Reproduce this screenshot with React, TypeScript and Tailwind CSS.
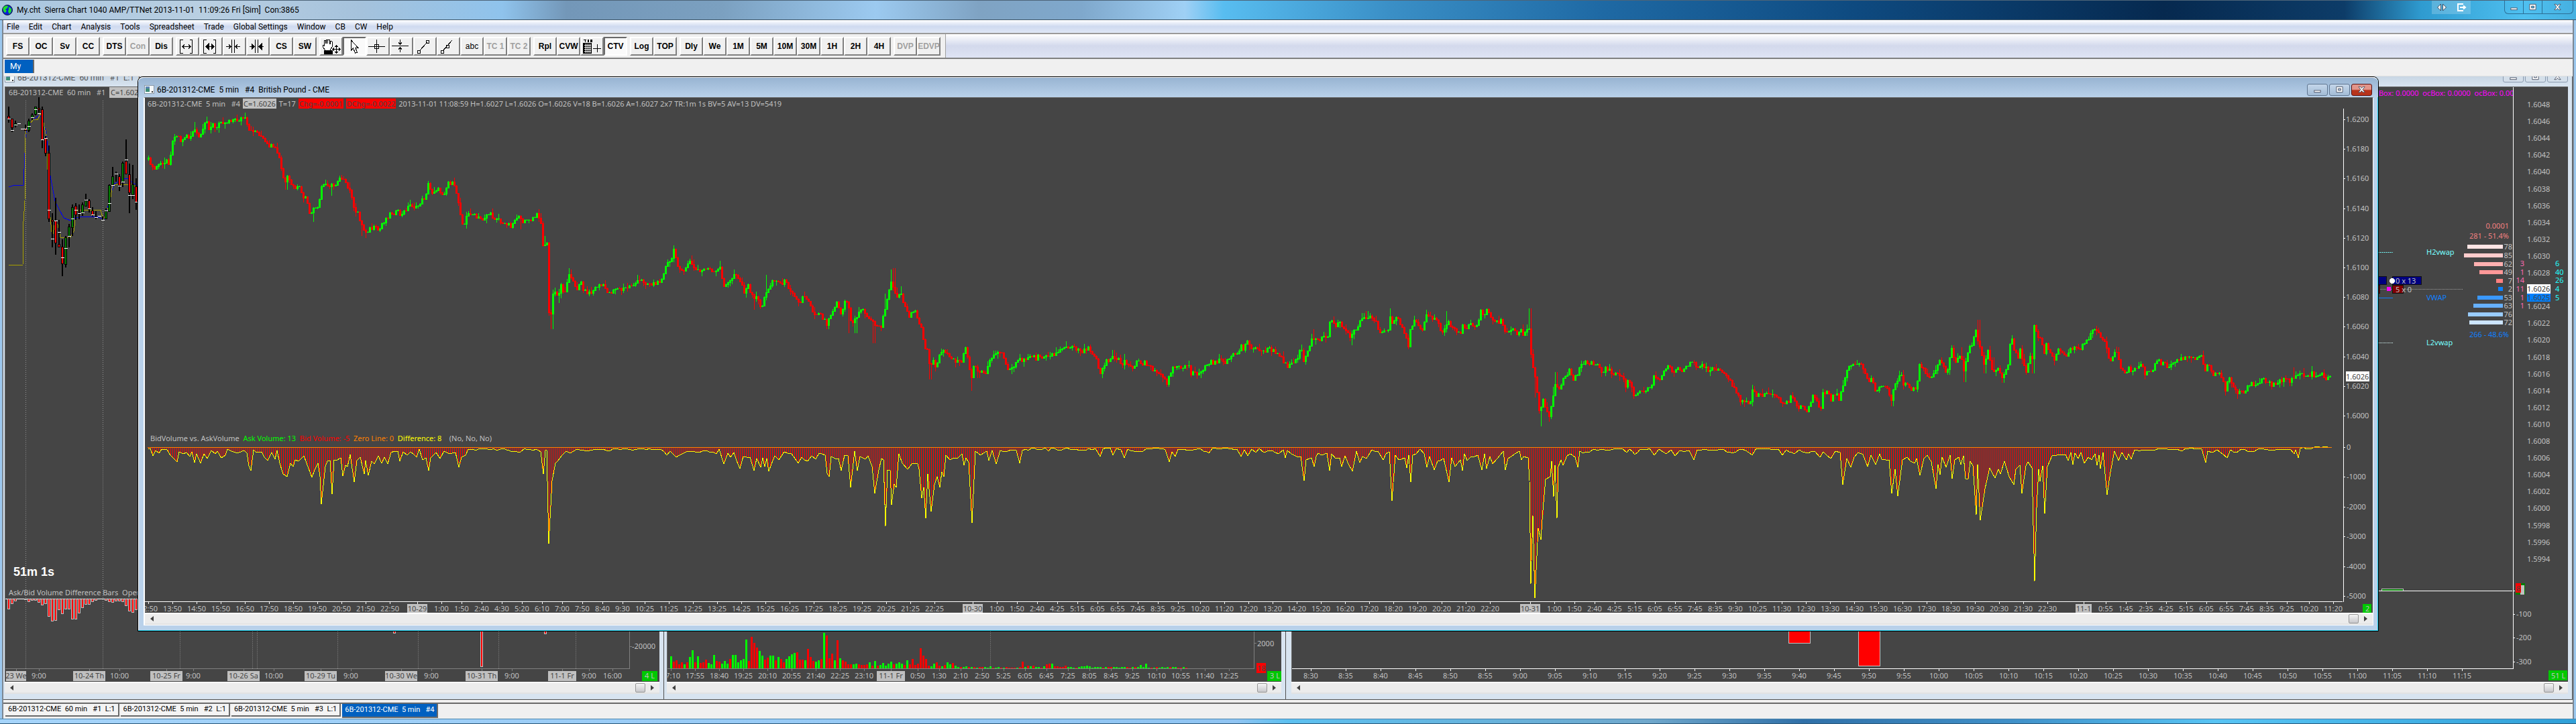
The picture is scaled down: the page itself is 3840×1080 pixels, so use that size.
import type { ReactNode } from 'react';
import clsx from 'clsx';

type Point = [number, number, number?];
type Label = { x: number; text: string; day?: boolean };

// Each trading session is digitised on its own grid; place() brings it into workspace pixels.
function place(src: string, ox: number, oy: number, kx: number, ky: number): Point[] {
  return src.trim().split(/\s+/).map((s) => {
    const [x, y, w] = s.split(',').map(Number);
    return [ox + x / kx, oy + y / ky, w === undefined ? undefined : oy + w / ky];
  });
}

const price: Point[] = [
  ...place(`27,190 32,196 38,224 46,210 52,200 58,212 64,192 68,200 74,160 78,120 85,118 94,138 102,120 110,128 117,98,82 126,130
  135,108 141,76 147,100 153,86 161,108 168,74 178,86 186,74 200,76 216,68 222,100 227,114 234,104 245,118 258,145 264,160 271,148
  278,172 286,200 290,245 296,260,280 298,238 306,262 316,285 322,264 328,300 334,302 342,345 348,350,375 352,330 357,345 362,310
  365,272 375,262 385,268,298 392,268 400,242 405,242 412,262 420,282 426,300 430,356 436,342 443,380,415 450,402,422 460,394
  468,392 478,400 484,376 492,362 500,348 515,346 522,356 530,336 540,322 550,334 560,314 568,300 573,262 580,288 590,276 602,290
  607,285 612,256 620,262 628,284 634,330 640,374 644,380 650,352 656,348 668,362 680,366 690,348 700,360 710,362 718,384 726,376
  736,386 745,356 752,366,396 756,374 762,366 770,374 778,364 788,350 793,372 796,450 799,436,415 805,440 808,640 813,642,688 818,570
  826,594,612 832,552 838,592 843,550 848,528,510 855,548 864,568 870,548 878,576 890,582 906,556 916,564 926,582 938,568 950,572
  965,562 988,544 1000,554 1020,554 1030,530 1038,498 1046,490 1052,458 1060,498 1072,526 1082,482 1090,510 1104,520 1115,506
  1130,526 1142,508,488 1150,562 1160,552 1172,520 1184,556 1192,588 1195,552 1208,604,632 1213,586 1222,628 1230,590,530 1238,560
  1245,544 1260,552 1268,548 1280,572 1290,592 1297,616 1305,586 1316,606 1326,646 1334,636 1350,670,687 1358,640 1366,618 1371,606
  1378,648 1386,600 1392,622,700 1398,670 1406,656,700 1414,636 1422,628 1432,660 1440,666,730 1454,688 1462,640,585 1468,600
  1474,542,514 1480,560,510 1484,590 1494,582,562 1502,620 1510,648 1520,628 1528,670`, 200, 140, 1.3067, 1.96),
  ...place(`229,400 236,485 238,448 244,540,590 250,508 256,556 262,500 270,480 280,490 292,520,544 300,512 306,525 312,465 320,510
  324,606,634 328,538 338,552,585 346,562 354,560 358,520 368,498 380,480 388,510 396,545 406,535 414,530 418,510 426,520 440,492
  452,510 458,495 464,505 468,486 478,500 488,490 500,466 530,466 540,480 550,466 556,480 568,500 575,566 582,540 588,510 594,520
  600,498,476 610,510 618,535,545 622,505,490 630,536 640,540 650,516 656,530 662,518 672,538 684,556 694,576 706,604,618 710,568
  720,535 735,540 748,536 753,580 758,560 768,568 780,540 790,524 805,518 820,518 832,500 846,490 850,462 856,475 860,432 866,455
  874,475 880,458 888,475 896,490 904,455 908,488 912,462 920,490 930,510 938,535 950,530 955,530 962,490 967,465 972,518 978,492
  984,455 990,430,395 1004,440 1010,425,405 1018,430 1024,360 1030,355 1034,380 1040,366 1050,385 1058,400 1064,425,457 1070,402
  1078,385 1085,345 1095,355,325 1104,345 1114,370 1120,400 1130,405 1138,395 1140,340,313 1146,380 1154,350 1160,375 1168,412
  1176,455 1180,400 1188,350 1196,375 1204,390 1210,345,318 1216,335 1222,365 1226,340 1234,375 1242,410 1250,380,325 1252,355
  1258,380 1266,390 1276,420 1282,376 1290,390 1296,368 1304,378 1312,370 1316,318 1322,348 1328,318 1334,330 1344,370 1356,360
  1364,395 1372,405 1380,395 1390,410 1396,400 1402,420 1406,392 1412,395,313 1416,520 1422,570,660 1426,620 1430,710 1434,708,773
  1438,665 1444,700 1450,728,756 1456,680,620 1460,632`, 1200, 340, 1.3067, 2.613),
  ...place(`134,480,435 140,500 146,465 152,440 158,425 163,460 172,432 180,390 190,400 205,395 210,438 218,415 228,440 236,440
  246,455 250,490 258,465 266,548 272,510 286,505 294,495 298,452 306,465 312,448 318,412 324,415 330,435 340,418 348,422 356,410
  364,385 370,410 378,400 390,435 398,418 406,430 416,438 424,470 436,525 444,555 452,545 458,570 462,512 470,535 482,522 496,528
  504,530 514,570 522,560 528,528 536,570 545,585 555,602 562,535 570,550 576,595 580,525 588,520 594,550 602,515 607,550 614,490
  620,430 630,390 636,410 644,395 650,430 656,485 660,455 668,515 676,490 684,495 690,510 695,560,576 700,480 706,480 710,430
  716,500 720,465 726,520 732,490 737,520 740,400 748,425 756,465 764,450 770,420 775,380 780,400 786,440 790,400 795,335 802,400
  810,365,330 816,430,475 824,330 830,320 835,242 840,310,215 850,405,440 855,345 864,430,372 870,415 880,450,480 890,400 894,282 900,340
  906,370 908,320 914,385 920,435 926,370 930,385,440 933,230 940,290 945,290 950,360 953,312 960,360 966,385 972,335 980,350
  986,365 996,330 1008,342 1014,320 1022,300 1028,262 1034,262 1038,255 1046,300 1052,315 1058,385 1070,350 1076,410 1086,435
  1090,410 1096,440 1104,415 1112,400 1118,438 1130,435 1136,385 1146,395 1158,415 1170,390 1180,375 1194,375 1205,378 1212,360
  1218,425 1224,405 1232,445 1244,435 1252,510,532 1258,445 1264,490 1272,515,545 1282,515 1294,485 1302,490 1314,462 1328,485
  1340,470 1350,465 1360,475,492 1366,450,415 1378,435 1386,450 1396,440 1404,450 1412,435 1418,460 1422,452`, 2200, 400, 1.12, 2.8),
];

const difference: Point[] = [
  ...place(`27,1036 32,1036 36,1058 42,1042 48,1050 54,1038 64,1040 70,1056 76,1064 83,1076 88,1046 96,1052 102,1048 108,1060
  112,1046 118,1078 122,1052 130,1080 136,1052 142,1066 150,1042 158,1052 162,1044 170,1064 178,1056 181,1038 190,1044 204,1048
  214,1042 220,1050 224,1088 228,1102 232,1040 238,1048 248,1046 260,1072 268,1048 275,1068 278,1042 284,1080 290,1112 298,1120
  304,1080 310,1090 314,1070 320,1074 330,1058 336,1080 346,1122 352,1100 358,1080 362,1120 365,1200 372,1090 376,1074 381,1072
  385,1170 390,1070 402,1064 407,1118 412,1085 416,1090 421,1055 428,1134 434,1072 440,1062 448,1112 451,1072 456,1116 462,1075
  468,1082 476,1058 482,1080 488,1062 494,1082 500,1048 514,1044 518,1074 524,1046 532,1056 538,1046 550,1062 556,1038 562,1070
  568,1065 573,1102 578,1065 588,1048 596,1066 604,1044 614,1052 626,1048 633,1092 638,1062 646,1056 651,1038 700,1037 706,1042
  720,1036 752,1048 760,1036 788,1042 792,1046 797,1112 801,1042 804,1040 808,1315 814,1130 820,1080 826,1072 834,1056 842,1044
  850,1050 862,1038 880,1044 900,1038 920,1042 950,1038 980,1038 1026,1038 1038,1056 1044,1044 1056,1062 1070,1050 1086,1044
  1100,1048 1114,1042 1126,1046 1134,1052 1140,1038 1149,1082 1156,1050 1162,1062 1168,1048 1174,1072 1180,1095 1186,1060
  1200,1062 1207,1102 1213,1066 1220,1092 1224,1064 1228,1090 1232,1066 1236,1104 1248,1058 1256,1070 1266,1046 1280,1052
  1294,1080 1300,1062 1312,1074 1320,1058 1328,1068 1334,1050 1346,1056 1350,1110 1354,1120 1358,1060 1372,1066 1377,1102
  1384,1056 1390,1058 1396,1150 1404,1044 1408,1102 1414,1060 1424,1068 1430,1058 1438,1090 1443,1168 1450,1100 1456,1066
  1460,1070 1463,1264 1468,1100 1472,1102 1475,1202 1480,1140 1484,1150 1490,1052 1496,1080 1506,1098 1516,1080 1526,1082`, 200, 140, 1.3067, 1.96),
  ...place(`222,940 227,1052 231,1012 235,1132 239,960 246,1106 252,1000 258,970 262,1010 266,950 270,970 275,885 282,905 290,895
  298,895 306,880 310,925 314,895 319,915 325,1150 332,870 342,885 354,870 358,908 364,868 372,920 380,868 395,870 408,866 412,868
  418,916 424,868 440,860 468,858 474,870 480,856 500,864 510,858 540,866 566,860 575,892 580,862 594,858 600,885 606,860 616,866
  622,895 628,862 652,872 664,862 690,860 702,864 710,912 715,872 721,892 727,862 750,866 770,860 787,878 795,858 830,860 842,862
  850,890 856,866 862,888 870,862 878,876 884,860 894,876 904,868 910,868 922,880 932,864 936,895 940,868 948,880 958,890 966,892
  972,985 976,904 982,900 986,895 992,930 996,890 1000,878 1006,886 1016,878 1022,945 1026,880 1034,900 1042,895 1046,930 1052,888
  1066,948 1074,870 1080,915 1086,890 1094,900 1104,866 1116,870 1126,905 1132,880 1138,872 1144,1064 1150,885 1156,905 1168,895
  1172,935 1176,885 1180,990 1184,885 1190,880 1198,862 1206,880 1211,932 1216,890 1226,942 1232,910 1244,900 1254,990 1260,895
  1266,930 1276,905 1281,945 1284,880 1290,908 1298,890 1310,885 1318,942 1324,880 1328,938 1334,890 1340,920 1348,900 1354,885
  1360,870 1364,942 1370,900 1382,880 1392,870 1396,905 1400,890 1408,895 1411,985 1414,1388 1418,1120 1422,1443 1428,1170
  1434,1215 1438,1100 1442,980 1452,970 1455,910 1458,1048 1461,926 1465,1132`, 1200, 340, 1.3067, 2.613),
  ...place(`138,830 142,800 146,822 152,785 158,775 166,790 170,832 174,765 184,768 196,756 220,758 244,752 252,770 256,755
  265,778 274,756 290,752 298,780 306,756 318,775 326,758 333,785 340,762 356,762 364,802 370,760 384,756 398,762 410,755 428,774
  440,757 450,762 461,780 468,754 505,755 512,780 518,758 532,776 540,758 550,770 566,765 574,790 580,766 586,780 593,795 600,765
  608,770 613,903 619,795 626,832 632,790 638,770 646,778 654,830 660,780 668,820 674,775 678,798 690,800 694,942 700,840 704,952
  712,800 720,790 732,815 736,795 741,865 748,795 754,780 760,810 768,922 772,820 775,862 778,790 785,832 792,780 795,878 800,800
  806,790 810,820 814,785 818,878 822,878 825,805 830,825 835,1030 838,820 842,1052 850,920 858,835 867,875 872,840 876,860
  882,805 890,870 898,904 902,840 908,822 912,940 918,825 922,808 928,835 933,1307 936,1000 940,840 942,890 946,825 950,1025
  954,830 962,785 970,782 984,778 989,803 993,770 997,820 1000,772 1006,795 1010,770 1016,815 1022,790 1028,800 1034,775
  1037,822 1040,780 1043,836 1047,770 1054,946 1060,850 1066,765 1073,804 1078,770 1086,800 1090,775 1094,798 1100,758 1120,760
  1140,754 1170,755 1176,762 1190,752 1212,755 1218,812 1222,765 1230,770 1238,758 1246,775 1254,792 1260,758 1270,770 1278,756
  1298,768 1306,755 1330,758 1360,756 1366,775 1369,760 1373,792 1377,752 1400,748 1422,748`, 2200, 400, 1.12, 2.8),
];

const ZERO_Y = 667;
const FIRST_BAR = 221;
const LAST_BAR = 3475;

function at(points: Point[], x: number) {
  let i = 1;
  while (i < points.length - 1 && points[i][0] < x) i++;
  const [x0, y0] = points[i - 1];
  const [x1, y1] = points[i];
  const t = Math.min(1, Math.max(0, (x - x0) / (x1 - x0)));
  return y0 + (y1 - y0) * t;
}

// small repeatable jitter, 0..1
const noise = (n: number) => {
  const s = Math.sin(n * 12.9898) * 43758.5453;
  return s - Math.floor(s);
};

function buildCandles() {
  const out = { upBody: '', upWick: '', downBody: '', downWick: '' };
  let open = at(price, FIRST_BAR - 1);
  for (let x = FIRST_BAR, i = 0; x <= LAST_BAR; x += 3, i++) {
    const close = at(price, x + 1) + (noise(i) - 0.5) * 7;
    const spike = price.find((p) => p[2] !== undefined && Math.abs(p[0] - x) <= 2)?.[2];
    let top = Math.min(open, close);
    let bottom = Math.max(open, close);
    const up = close < open;
    const body = `M${x + 0.5} ${Math.round(top)}V${Math.round(bottom) + 1}`;
    top -= noise(i + 500) > 0.6 ? noise(i + 900) * 8 : 1;
    bottom += noise(i + 1700) > 0.6 ? noise(i + 2500) * 8 : 1;
    if (spike !== undefined) {
      top = Math.min(top, spike);
      bottom = Math.max(bottom, spike);
    }
    const wick = `M${x + 0.5} ${Math.round(top)}V${Math.round(bottom)}`;
    if (up) {
      out.upBody += body;
      out.upWick += wick;
    } else {
      out.downBody += body;
      out.downWick += wick;
    }
    open = close;
  }
  return out;
}

function buildDifference() {
  let line = '';
  let bars = '';
  difference.forEach(([x, y], i) => {
    if (i > 0) {
      const [px, py] = difference[i - 1];
      const steps = Math.floor((x - px) / 4);
      for (let s = 1; s < steps; s++) {
        const t = s / steps;
        line += `L${Math.round(px + (x - px) * t)} ${Math.round(py + (y - py) * t + noise(i * 7 + s) * 3 - 1)}`;
      }
    }
    line += `${i ? 'L' : 'M'}${Math.round(x)} ${Math.round(y)}`;
  });
  for (let x = FIRST_BAR; x <= LAST_BAR; x += 3) bars += `M${x + 0.5} ${ZERO_Y}V${Math.round(at(difference, x))}`;
  return { line, bars };
}

const candles = buildCandles();
const diff = buildDifference();

function run(first: number, step: number, texts: string): Label[] {
  return texts.split(' ').map((text, i) => ({ x: first + i * step, text }));
}

const mainTimes: Label[] = [
  ...run(221, 36, '12:50 13:50 14:50 15:50 16:50 17:50 18:50 19:50 20:50 21:50 22:50'),
  { x: 622, text: '10-29', day: true },
  ...run(658, 30, '1:00 1:50 2:40 4:30 5:20 6:10 7:00 7:50 8:40 9:30'),
  ...run(961, 36, '10:25 11:25 12:25 13:25 14:25 15:25 16:25 17:25 18:25 19:25 20:25 21:25 22:25'),
  { x: 1450, text: '10-30', day: true },
  ...run(1486, 30, '1:00 1:50 2:40 4:25 5:15 6:05 6:55 7:45 8:35 9:25'),
  ...run(1789, 36, '10:20 11:20 12:20 13:20 14:20 15:20 16:20 17:20 18:20 19:20 20:20 21:20 22:20'),
  { x: 2281, text: '10-31', day: true },
  ...run(2317, 30, '1:00 1:50 2:40 4:25 5:15 6:05 6:55 7:45 8:35 9:30'),
  ...run(2620, 36, '10:25 11:30 12:30 13:30 14:30 15:30 16:30 17:30 18:30 19:30 20:30 21:30 22:30'),
  { x: 3106, text: '11-1', day: true },
  ...run(3139, 30, '0:55 1:45 2:35 4:25 5:15 6:05 6:55 7:45 8:35 9:25'),
  ...run(3442, 36, '10:20 11:20'),
];

const hourlyTimes: Label[] = [
  { x: 24, text: '23 We', day: true },
  { x: 58, text: '9:00' },
  { x: 133, text: '10-24 Th', day: true },
  { x: 178, text: '10:00' },
  { x: 248, text: '10-25 Fr', day: true },
  { x: 288, text: '9:00' },
  { x: 363, text: '10-26 Sa', day: true },
  { x: 408, text: '10:00' },
  { x: 478, text: '10-29 Tu', day: true },
  { x: 523, text: '9:00' },
  { x: 598, text: '10-30 We', day: true },
  { x: 643, text: '9:00' },
  { x: 718, text: '10-31 Th', day: true },
  { x: 763, text: '9:00' },
  { x: 838, text: '11-1 Fr', day: true },
  { x: 878, text: '9:00' },
  { x: 913, text: '16:00' },
];

const volumeTimes: Label[] = [
  ...run(1000, 36, '17:10 17:55 18:40 19:25 20:10 20:55 21:40 22:25 23:10'),
  { x: 1328, text: '11-1 Fr', day: true },
  ...run(1368, 32, '0:50 1:30 2:10 2:50 5:25 6:05 6:45 7:25 8:05 8:45 9:25'),
  ...run(1724, 36, '10:10 10:55 11:40 12:25'),
];

const ladderTimes: Label[] = Array.from({ length: 34 }, (_, i) => {
  const m = 510 + i * 5;
  return { x: 1954 + i * 52, text: `${Math.floor(m / 60)}:${String(m % 60).padStart(2, '0')}` };
});

// x, high, low, body top, body bottom, up?, last-trade tick
const hourly: [number, number, number, number, number, 'g' | 'r' | '', number][] = [
  [13, 159, 183, 173, 178, 'r', 177], [18, 177, 197, 177, 190, 'r', 194], [23, 180, 190, 184, 187, 'g', 186],
  [28, 0, 0, 0, 0, '', 184], [33, 0, 0, 0, 0, '', 192], [38, 186, 195, 192, 194, 'r', 192],
  [43, 177, 197, 180, 194, 'g', 188], [48, 169, 179, 171, 175, 'g', 175], [53, 159, 172, 159, 170, 'g', 163],
  [58, 145, 168, 161, 163, 'r', 169], [63, 159, 221, 163, 208, 'r', 208], [68, 203, 233, 206, 228, 'r', 206],
  [73, 217, 331, 228, 326, 'r', 313], [78, 318, 369, 328, 330, 'r', 356], [83, 295, 380, 329, 362, 'r', 329],
  [88, 328, 369, 364, 368, 'r', 346], [93, 357, 412, 368, 393, 'r', 384], [98, 352, 399, 354, 394, 'g', 370],
  [103, 334, 369, 338, 352, 'g', 352], [108, 305, 352, 309, 339, 'g', 326], [113, 303, 328, 307, 320, 'r', 313],
  [118, 305, 327, 0, 0, '', 318], [123, 302, 322, 305, 318, 'g', 317], [128, 289, 307, 299, 307, 'g', 298],
  [133, 297, 317, 299, 312, 'r', 311], [138, 309, 323, 314, 320, 'r', 320], [143, 315, 327, 0, 0, '', 324],
  [148, 0, 0, 0, 0, '', 322], [153, 323, 328, 0, 0, '', 328], [158, 311, 327, 315, 326, 'g', 314],
  [163, 275, 315, 276, 315, 'g', 303], [168, 249, 276, 263, 275, 'g', 276], [173, 256, 271, 0, 0, '', 259],
  [178, 260, 285, 263, 276, 'r', 277], [183, 241, 279, 243, 271, 'g', 271], [188, 208, 259, 240, 259, 'r', 238],
  [193, 244, 318, 260, 287, 'r', 291], [198, 246, 297, 275, 290, 'g', 291], [203, 266, 313, 278, 302, 'r', 301],
];

const hourlyVolume = [15, 7, 3, 0, 0, 1, 4, 2, 2, 5, 9, 7, 26, 33, 32, 16, 22, 15, 15, 30, 30, 21, 13, 8, 8, 4, 2, 0, 0, 2, 4, 5, 3, 3, 4, 10, 18, 20, 16];

const volume = `g18 r10 r12 r6 r9 g6 r9 g17 g27 r9 g18 r8 r9 r13 g8 g6 g20 r11 r10 g7 g11 g7 r14 g20 g20 g9 g12 g14 g43 r11 r47 r38
r31 g26 g19 r13 r16 g19 g19 r12 g17 r14 r9 g14 g18 g21 g23 r24 r13 r13 g12 r29 r17 r11 g10 g12 r14 g53 r49 r15 r22 g12 r42 g15 r12
r10 r6 r6 g6 g7 r6 r5 r5 r6 g9 r4 g11 r4 g5 g8 g4 g7 g10 r6 g7 g9 g7 r5 g12 r6 r14 r5 r7 r30 r19 r14 r4 g3 g7 r9 r4 g3 r5 g9 g6
r8 g4 g2 r2 g2 g3 r2 g2 r2 g1 r2 r2 g2 g1 g3 r1 g1 g2 r1 g1 r2 r1 r1 r1 g1 r2 r10 g2 r4 g3 r4 g2 g2 r1 g3 r6 r7 g7 r3 r3 r2 r2 r4
g2 g2 g1 r1 g2 g3 g3 g4 g3 g1 g2 g2 g2 r1 g2 r2 r2 g2 g2 g1 g2 g2 r2 r1 g2 r2 g2 g5 g2 g7 g1 r1 g1 r2 g1 g2 g1 g2 r2 g2 g2 r1 r1 g2 r1`
  .split(/\s+/)
  .map((s) => ({ up: s[0] === 'g', h: Number(s.slice(1)) }));

const domRows = [
  { y: 368, x: 3678, n: 78, fill: '#ffe4e4' },
  { y: 381, x: 3673, n: 85, fill: '#ffcccc' },
  { y: 394, x: 3688, n: 62, fill: '#ffb0b0' },
  { y: 406, x: 3696, n: 49, fill: '#ff9898' },
  { y: 419, x: 3721, n: 7, fill: '#ff8080' },
  { y: 431, x: 3724, n: 2, fill: '#0a80ff' },
  { y: 444, x: 3693, n: 53, fill: '#3a98ff' },
  { y: 456, x: 3687, n: 63, fill: '#66b0ff' },
  { y: 469, x: 3679, n: 76, fill: '#99ccff' },
  { y: 481, x: 3681, n: 72, fill: '#cce4ff' },
];

const depth: [number, string, string][] = [
  [393, '3', '6'], [406, '1', '40'], [418, '14', '26'], [431, '11', '4'], [444, '1', '5'], [456, '1', ''],
];

function TimeAxis({ labels, y, stroke }: { labels: Label[]; y: number; stroke: string }) {
  return (
    <g>
      {labels.map(({ x, text, day }) => {
        const w = text.length * 6;
        return (
          <g key={x}>
            <path d={`M${x + 0.5} ${y}v4`} stroke={stroke} />
            {day && <rect x={x - w / 2} y={y + 4} width={w} height={15} fill="#c0c0c0" />}
            <text x={x} y={y + 15} textAnchor="middle" fill={day ? '#454545' : '#c0c0c0'}>{text}</text>
          </g>
        );
      })}
    </g>
  );
}

function Canvas({ x, y, className, children }: { x: number; y: number; className?: string; children: ReactNode }) {
  return (
    <svg className={clsx("h-full min-w-0 overflow-hidden bg-[#454545] font-['Noto_Sans',sans-serif] text-[11px] [&_text]:whitespace-pre", className)} shapeRendering="crispEdges" fill="#c0c0c0">
      <g transform={`translate(${-x} ${-y})`}>{children}</g>
    </svg>
  );
}

function ScrollBar() {
  return (
    <div className="flex h-[18px] shrink-0 items-center justify-between border-y-2 border-t-white border-b-[#e2e2e2] bg-[#ececec] px-2">
      <span className="h-0 w-0 border-y-[4px] border-r-[5px] border-y-transparent border-r-[#404040]" />
      <span className="flex items-center gap-2">
        <span className="h-[14px] w-[15px] rounded-[2px] border border-[#979797] bg-linear-to-b from-[#f4f4f4] to-[#c8c8cc]" />
        <span className="h-0 w-0 border-y-[4px] border-l-[5px] border-y-transparent border-l-[#404040]" />
      </span>
    </div>
  );
}

function ChartIcon() {
  return (
    <svg className="h-[13px] w-[15px] shrink-0" viewBox="0 0 15 13" shapeRendering="crispEdges">
      <rect x="0.5" y="0.5" width="14" height="12" fill="#f4f8fa" stroke="#8a98a8" />
      <rect x="2" y="2" width="6" height="8" fill="#3f8f7a" />
      <rect x="2" y="2" width="6" height="3" fill="#5d86b5" />
      <rect x="11" y="9" width="2" height="2" fill="#333" />
    </svg>
  );
}

const glyphs = {
  min: <rect x="2.5" y="8.5" width="10" height="3" />,
  max: <path d="M2.5 2.5h10v9h-10zM5.5 5.5v3h4v-3z" fillRule="evenodd" />,
  close: <path d="M2.5 2.5h3l2 2.5 2-2.5h3l-3.4 4.5 3.4 4.5h-3l-2-2.5-2 2.5h-3L5.9 7z" />,
};

function WindowButton({ kind, className }: { kind: keyof typeof glyphs; className?: string }) {
  return (
    <button type="button" aria-label={kind} className={clsx('flex items-center justify-center', className)}>
      <svg className="h-[13px] w-[15px]" viewBox="0 0 15 14" fill="#fff" stroke="#4a5266">{glyphs[kind]}</svg>
    </button>
  );
}

const menus = ['File', 'Edit', 'Chart', 'Analysis', 'Tools', 'Spreadsheet', 'Trade', 'Global Settings', 'Window', 'CB', 'CW', 'Help'];

const icons: Record<string, ReactNode> = {
  spread: <path d="M3.5 3v20M8 3.5H3M8 23.5H3M21.5 3v20M18 3.5h4M18 23.5h4M7 13.5h12M10 10.5l-3 3 3 3M16 10.5l3 3-3 3" />,
  spreadBold: <path d="M3.5 3v20M8 3.5H3M8 23.5H3M21.5 3v20M18 3.5h4M18 23.5h4M7 13.5h12M11 9.5l-4 4 4 4zM15 9.5l4 4-4 4z" fill="#000" />,
  squeeze: <path d="M10.5 3v20M14.5 3v20M2 13.5h7M6 10.5l3 3-3 3M23 13.5h-7M19 10.5l-3 3 3 3" />,
  squeezeBold: <path d="M10.5 3v20M14.5 3v20M2 13.5h7M5 9.5l4 4-4 4zM23 13.5h-7M20 9.5l-4 4 4 4z" fill="#000" />,
  cross: <path d="M0 13.5h25M12.5 3v20M9.5 10.5h6v6h-6z" />,
  hline: <path d="M0 12.5h25M12.5 3v7M10 7.5l2.5 2.500 2.500-2.500M12.500 22v-7M10 17.500l2.500-2.500 2.500 2.500" />,
  line: <path d="M6 20L18 7M3.5 19.5h4v4h-4zM16.5 4.5h4v4h-4z" />,
  ray: <path d="M6 20L20 4M3.5 19.5h4v4h-4zM11.5 11.5h4v4h-4z" />,
  arrow: <path d="M9.5 4v15l3-3 3 7 3-1-3-7h4z" fill="#fff" />,
  hand: (
    <>
      <path d="M6 19c-3-3-4-6-4-8l2 1V5l2-1 1 5V3h2v6l1-6h2l1 7 1-5 2 1v8l-3 5z" fill="#fff" />
      <path d="M4 19h12v5H4z" fill="#000" />
      <path d="M22.5 12v11M17 17.5h11M20.5 14l2-2 2 2M20.5 21l2 2 2-2M19 15.5l-2 2 2 2M26 15.5l2 2-2 2" />
    </>
  ),
  grid: (
    <>
      <path d="M2 3h4M4 3v4M8 3l1 4 1-4M12 3l1 4 1-4 1 4" />
      <path d="M1.5 8.5h12v15h-12z" fill="#000" />
      <path d="M3 11.5h10M3 14.5h10M3 17.5h10M3 20.5h10M5 9v14M8 9v14M11 9v14" stroke="#fff" />
      <path d="M16 16.5h12M22.5 10v12" />
    </>
  ),
};

const toolbar: string[][] = [
  ['FS', 'OC', 'Sv', 'CC'],
  ['DTS', 'Con', 'Dis'],
  ['@spread', '@spreadBold', '@squeeze', '@squeezeBold', 'CS', 'SW'],
  ['@hand', '@arrow', '@cross', '@hline', '@line', '@ray', 'abc', 'TC 1', 'TC 2'],
  ['Rpl', 'CVW', '@grid', 'CTV'],
  ['Log', 'TOP'],
  ['Dly', 'We', '1M', '5M', '10M', '30M', '1H', '2H', '4H'],
  ['DVP', 'EDVP'],
];
const disabled = ['Con', 'TC 1', 'TC 2', 'DVP', 'EDVP'];
const pressed = ['@arrow', 'CTV'];

function ToolButton({ name }: { name: string }) {
  return (
    <button
      type="button"
      aria-label={name.replace('@', '')}
      disabled={disabled.includes(name)}
      className={clsx(
        "flex h-[28px] w-[35px] items-center justify-center border-2 font-['Liberation_Sans',sans-serif] text-[12px] whitespace-nowrap",
        pressed.includes(name) ? 'border-t-[#696969] border-r-white border-b-white border-l-[#696969] bg-[#fafafa]' : 'border-t-white border-r-[#808080] border-b-[#808080] border-l-white bg-[#f0f0f0]',
        name === 'abc' ? 'font-normal' : 'font-bold',
        disabled.includes(name) ? 'text-[#a0a0a0]' : 'text-black',
      )}
    >
      {name[0] === '@' ? (
        <svg className="h-[26px] w-[29px] shrink-0" viewBox="0 0 29 26" fill="none" stroke="#000" shapeRendering="crispEdges">{icons[name.slice(1)]}</svg>
      ) : (
        name
      )}
    </button>
  );
}

function TitleBar() {
  return (
    <header className="flex h-[30px] items-center border-t border-b border-t-[#4d6478] border-b-[#3c5568] bg-[linear-gradient(90deg,#a9c6df_0%,#b9cfe2_8%,#a5c2dc_14%,#8fc3ec_19.5%,#7397b8_22%,#7ba0c0_28%,#9ccaf0_34%,#7fa3c3_38%,#7fa8cc_42%,#9fd0f5_46%,#58bdf0_47.5%,#3a8fc6_54%,#1f6aa5_62%,#0e4a80_72%,#06294f_84%,#0d3c68_91%,#2f9bd0_94%,#4fc0f0_98%,#45b0e0_100%)]">
      <svg className="ml-[3px] h-4 w-4" viewBox="0 0 16 16">
        <circle cx="8" cy="8" r="7.5" fill="#0a1fd8" stroke="#123" />
        <path d="M2 4c3-3 6-3 7-2l-1 3-3 2 2 2-2 3C2 11 1 7 2 4zM10 3l4 3v4l-3 4-2-4 1-3z" fill="#1fe02a" />
      </svg>
      <h1 className="ml-[6px] text-[12px] whitespace-pre text-black">My.cht  Sierra Chart 1040 AMP/TTNet 2013-11-01  11:09:26 Fri [Sim]  Con:3865</h1>
      <div className="ml-auto flex h-full items-start">
        <div className="mr-[50px] flex h-5 w-[58px] items-center justify-around bg-white/20">
          <svg className="h-3 w-4" viewBox="0 0 16 12" fill="#fff" stroke="#33475c"><path d="M6.5 1v10L1.5 6zM9.5 1v10l5-5z" /></svg>
          <svg className="h-3 w-4" viewBox="0 0 16 12" fill="none" stroke="#fff" strokeWidth="2"><path d="M11 1H3v10h8M6 6h8M11 3.5L14 6l-3 2.5" /></svg>
        </div>
        <div className="mr-1 flex h-5 divide-x divide-[#2c6f96] rounded-b-md border border-t-0 border-[#2c6f96]">
          <WindowButton kind="min" className="w-7" />
          <WindowButton kind="max" className="w-7" />
          <WindowButton kind="close" className="w-[45px]" />
        </div>
      </div>
    </header>
  );
}

function BackWindow({ title, buttons, className, children }: { title?: string; buttons?: boolean; className: string; children: ReactNode }) {
  return (
    <section className={clsx('flex min-w-0 flex-col border-r border-[#505050] bg-[#d8e4f0] pr-[6px]', className)}>
      <div className="flex h-[15px] shrink-0 items-end overflow-hidden bg-linear-to-b from-[#c8d6e4] to-[#d8e4f0] pb-[6px] text-[12px] leading-[14px] text-[#555]">
        {title && (
          <>
            <ChartIcon />
            <h2 className="ml-1 whitespace-pre">{title}</h2>
          </>
        )}
        {buttons && (
          <div className="ml-auto flex gap-[2px]">
            {(['min', 'max', 'close'] as const).map((k) => (
              <WindowButton key={k} kind={k} className="h-[18px] w-[31px] rounded-[3px] border border-[#8c9cb0] bg-[#d4dfea]" />
            ))}
          </div>
        )}
      </div>
      <div className="flex min-h-0 flex-1 flex-col border-t border-l border-[#696969]">
        {children}
      </div>
      <ScrollBar />
      <div className="h-[8px] shrink-0" />
    </section>
  );
}

function HourlyChart() {
  return (
    <Canvas x={8} y={130} className="w-full">
      <path d="M38.5 150V997M153.5 150V997M268.5 150V997M376.5 150V997M383.5 150V997M503.5 150V997M623.5 150V997M743.5 150V997M858.5 150V997" stroke="#909090" strokeDasharray="1 2" />
      <text x="13" y="142">6B-201312-CME  60 min   #1</text>
      <rect x="163" y="130" width="120" height="16" fill="#c0c0c0" />
      <text x="165" y="142" fill="#454545">C=1.6026</text>
      <g fill="none">
        <path d="M13 279L22 276H35L38 205L40 192L48 180L58 172L62 174L68 195L72 225L75 262L82 300L88 312L95 325L105 329L112 325L125 323H145L155 328L160 312L165 290L170 275L180 268L190 266L197 272L205 277" stroke="#0000f0" />
        <path d="M13 395H34L35 330L37 300L38 200L40 190L50 178L56 179L60 170L64 178L69 205L73 300L76 335L78 356L82 330L86 335L90 354H105L110 345L113 320L116 313H150L154 328L160 314L164 300L168 275H195L203 278" stroke="#a8a000" />
      </g>
      {hourly.map(([x, hi, lo, top, bot, dir, tick]) => (
        <g key={x}>
          {lo > 0 && <rect x={x - 1} y={hi} width={2} height={lo - hi} fill="#000" />}
          {dir && <rect x={x - 1.5} y={top} width={3} height={Math.max(1, bot - top)} fill={dir === 'g' ? '#008000' : '#f00'} stroke="#000" />}
          <rect x={x - 2} y={tick} width={5} height={1} fill="#fff" />
        </g>
      ))}
      <text x="20" y="859" fill="#fff" className="font-['Liberation_Sans',sans-serif] text-[18px] font-bold">51m 1s</text>
      <text x="13" y="888">Ask/Bid Volume Difference Bars  Open</text>
      <rect x="8" y="893" width="930" height="1" fill="#fff" />
      {hourlyVolume.map((h, i) => h > 0 && <rect key={i} x={11.5 + i * 5} y={893.5} width={3} height={h} fill="#f00" stroke="#c0c0c0" />)}
      <rect x="586.5" y="893.5" width="3" height="51" fill="#f00" stroke="#c0c0c0" />
      <rect x="716.5" y="893.5" width="3" height="101" fill="#f00" stroke="#c0c0c0" />
      <rect x="811.5" y="893.5" width="3" height="52" fill="#f00" stroke="#c0c0c0" />
      <path d="M8 997.5H938.5V130M938 964.5h4" fill="none" stroke="#808080" />
      <text x="942" y="968">-20000</text>
      <TimeAxis labels={hourlyTimes} y={997} stroke="#808080" />
      <rect x="957" y="1001" width="23" height="15" fill="#00c800" />
      <text x="961" y="1012">4 L</text>
    </Canvas>
  );
}

function VolumeChart() {
  return (
    <Canvas x={995} y={130} className="w-full">
      <path d="M1476.5 900V997" stroke="#909090" strokeDasharray="1 2" />
      {volume.map((v, i) => (
        <rect key={i} x={999 + i * 4} y={997 - v.h} width={3} height={v.h} fill={v.up ? '#0f0' : '#f00'} />
      ))}
      <path d="M995 997.5H1869.5V130M1869 959.5h4" fill="none" stroke="#808080" />
      <text x="1874" y="964">2000</text>
      <rect x="1873" y="989" width="14" height="15" fill="#f00" />
      <text x="1874" y="1001" fill="#454545">18</text>
      <TimeAxis labels={volumeTimes} y={997} stroke="#808080" />
      <rect x="1889" y="1001" width="23" height="15" fill="#00c800" />
      <text x="1893" y="1012">3 L</text>
    </Canvas>
  );
}

function LadderChart() {
  return (
    <>
      <Canvas x={1926} y={130} className="flex-1">
        <text x="3534" y="143" fill="#f0f">ocBox: 0.0000  ocBox: 0.0000  ocBox: 0.0000</text>
        <path d="M3500 376.5h67" stroke="#7ff" strokeDasharray="2 1" />
        <path d="M3500 511.5h67" stroke="#dff" strokeDasharray="1 1" />
        <path d="M3500 431.5h171" stroke="#a0a0a0" strokeDasharray="1 1" />
        <path d="M3500 444.5h67" stroke="#1080ff" />
        <path d="M3500.5 412.5h57v12h-57zM3566.5 412.5h43v12h-43z" fill="#000080" stroke="#111" />
        <path d="M3500.5 425.5h47v12h-47zM3566.5 425.5h16v12h-16z" fill="#800000" stroke="#111" />
        <ellipse cx="3566" cy="419" rx="4" ry="4" fill="#fff" />
        <rect x="3558" y="428" width="6" height="6" fill="#f0f" />
        <text x="3571" y="423">0 x 13</text>
        <text x="3571" y="436">5 x 0</text>
        <text x="3617" y="380" fill="#7ff">H2vwap</text>
        <text x="3617" y="448" fill="#1080ff">VWAP</text>
        <text x="3617" y="515" fill="#7ff">L2vwap</text>
        <text x="3740" y="341" textAnchor="end" fill="#f08080">0.0001</text>
        <text x="3740" y="356" textAnchor="end" fill="#f08080">281 - 51.4%</text>
        {domRows.map((r) => (
          <g key={r.n}>
            <rect x={r.x} y={r.y - 3} width={3731 - r.x} height={6} fill={r.fill} />
            <text x="3745" y={r.y + 4} textAnchor="end">{r.n}</text>
          </g>
        ))}
        <text x="3740" y="503" textAnchor="end" fill="#1080ff">266 - 48.6%</text>
        <rect x="3550.5" y="878.5" width="32" height="3" fill="#008000" stroke="#c0c0c0" />
        <rect x="3500" y="881" width="245" height="1" fill="#fff" />
        <rect x="2666.5" y="900.5" width="32" height="59" fill="#f00" stroke="#c0c0c0" />
        <rect x="2770.5" y="900.5" width="32" height="93" fill="#f00" stroke="#c0c0c0" />
        <path d="M1926 997.5H3760" stroke="#fff" />
        <TimeAxis labels={ladderTimes} y={997} stroke="#fff" />
      </Canvas>
      <Canvas x={3746} y={130} className="w-[82px] shrink-0">
        <path d="M3746.5 130V998M3746 881.5h3M3746 916.5h3M3746 951.5h3M3746 987.5h3" stroke="#fff" />
        {Array.from({ length: 28 }, (_, i) => (
          <text key={i} x="3767" y={160 + Math.round(i * 25.1)}>{(1.6048 - i * 0.0002).toFixed(4)}</text>
        ))}
        <rect x="3767" y="424" width="35" height="14" fill="#fff" />
        <text x="3767" y="435" fill="#333">1.6026</text>
        <rect x="3767" y="438" width="35" height="12" fill="#0080ff" />
        <text x="3767" y="448" fill="#454545">1.6025</text>
        {depth.map(([y, bid, ask]) => (
          <g key={y}>
            <text x="3763" y={y + 4} textAnchor="end" fill="#ff69b4">{bid}</text>
            <text x="3809" y={y + 4} fill="#2ff">{ask}</text>
          </g>
        ))}
        <rect x="3750" y="870" width="14" height="17" fill="#008000" />
        <rect x="3757" y="873" width="6" height="14" fill="#c0c0c0" />
        <rect x="3750" y="870" width="8" height="14" fill="#f00" />
        <text x="3751" y="882" fill="#454545">8</text>
        <text x="3751" y="920">-100</text>
        <text x="3751" y="955">-200</text>
        <text x="3751" y="991">-300</text>
        <rect x="3799" y="1000" width="28" height="15" fill="#00c800" />
        <text x="3803" y="1012">51 L</text>
      </Canvas>
    </>
  );
}

function MainChart() {
  return (
    <>
      <Canvas x={216} y={162} className="flex-1">
        <g fill="none">
          <path d={candles.downWick} stroke="#f00" />
          <path d={candles.upWick} stroke="#0f0" />
          <path d={candles.downBody} stroke="#f00" strokeWidth="3" />
          <path d={candles.upBody} stroke="#0f0" strokeWidth="3" />
          <path d={diff.bars} stroke="#f00" />
          <path d={diff.line} stroke="#ff0" />
        </g>
        <rect x="220" y="667" width="3256" height="1" fill="#ff8000" />
        <text x="224" y="658">
          BidVolume vs. AskVolume{'  '}
          <tspan fill="#0f0">Ask Volume: 13{'  '}</tspan>
          <tspan fill="#f00">Bid Volume: -5{'  '}</tspan>
          <tspan fill="#ff8000">Zero Line: 0{'  '}</tspan>
          <tspan fill="#ff0">Difference: 8{'    '}</tspan>
          (No, No, No)
        </text>
        <path d="M216 897.5H3500" stroke="#fff" />
        <TimeAxis labels={mainTimes} y={897} stroke="#fff" />
      </Canvas>
      <Canvas x={3492} y={162} className="w-[45px] shrink-0">
        <path d="M3493.5 140V898" stroke="#fff" />
        {Array.from({ length: 11 }, (_, i) => (
          <g key={i}>
            <rect x="3494" y={Math.round(178 + i * 44.2)} width="2" height="1" fill="#fff" />
            <text x="3497" y={Math.round(182 + i * 44.2)}>{(1.62 - i * 0.002).toFixed(4)}</text>
          </g>
        ))}
        {Array.from({ length: 6 }, (_, i) => (
          <g key={i}>
            <rect x="3494" y={Math.round(667 + i * 44.4)} width="2" height="1" fill="#fff" />
            <text x="3498" y={Math.round(671 + i * 44.4)}>{i * -1000 || '0'}</text>
          </g>
        ))}
        <rect x="3497" y="554" width="35" height="15" fill="#fff" />
        <text x="3497" y="566" fill="#454545">1.6026</text>
        <rect x="3522" y="901" width="13" height="14" fill="#00c800" />
        <text x="3526" y="912">2</text>
      </Canvas>
    </>
  );
}

function FrontWindow() {
  return (
    <section className="absolute top-0 right-[289px] bottom-[101px] left-[200px] flex flex-col rounded-t-lg border border-black bg-[#b9d1ea] shadow-[inset_-1px_-1px_0_#22d3ee,inset_1px_1px_0_#fff]">
      <div className="flex h-[30px] shrink-0 items-center rounded-t-lg border-t border-white bg-linear-to-b from-[#98b4d2] to-[#b9d1ea] pt-[6px] pr-[9px] pl-[9px]">
        <ChartIcon />
        <h2 className="ml-1 text-[12px] whitespace-pre text-black">6B-201312-CME  5 min   #4  British Pound - CME</h2>
        <div className="ml-auto flex gap-[2px]">
          <WindowButton kind="min" className="h-[18px] w-[31px] rounded-[3px] border border-[#5f7590] bg-linear-to-b from-[#c4d6ea] to-[#a3bcd6]" />
          <WindowButton kind="max" className="h-[18px] w-[31px] rounded-[3px] border border-[#5f7590] bg-linear-to-b from-[#c4d6ea] to-[#a3bcd6]" />
          <WindowButton kind="close" className="h-[18px] w-[31px] rounded-[3px] border border-[#5a1010] bg-linear-to-b from-[#e2958a] from-45% to-[#b8341c] to-55%" />
        </div>
      </div>
      <div className="mr-[7px] mb-[8px] ml-[8px] flex min-h-0 flex-1 flex-col border-t border-r border-b border-l-2 border-t-[#696969] border-r-white border-b-white border-l-white bg-[#454545]">
        <div className="flex h-[16px] shrink-0 items-center gap-1 pl-1 font-['Noto_Sans',sans-serif] text-[11px] leading-[15px] whitespace-pre text-[#c0c0c0]">
          <span>6B-201312-CME  5 min   #4</span>
          <span className="bg-[#c0c0c0] px-px text-[#454545]">C=1.6026</span>
          <span>T=17</span>
          <span className="bg-[#f00] px-px text-[#454545]">Chg=-0.0001</span>
          <span className="bg-[#f00] px-px text-[#454545]">DChg=-0.0022</span>
          <span>2013-11-01 11:08:59 H=1.6027 L=1.6026 O=1.6026 V=18 B=1.6026 A=1.6027 2x7 TR:1m 1s BV=5 AV=13 DV=5419</span>
        </div>
        <div className="flex min-h-0 flex-1">
          <MainChart />
        </div>
        <ScrollBar />
      </div>
    </section>
  );
}

const tabs = ['6B-201312-CME  60 min   #1  L:1', '6B-201312-CME  5 min   #2  L:1', '6B-201312-CME  5 min   #3  L:1', '6B-201312-CME  5 min   #4'];

export default function App() {
  return (
    <div className="flex h-screen flex-col bg-[#9cc8ee] font-['Roboto',sans-serif] text-black">
      <TitleBar />
      <div className="mr-[3px] ml-[3px] flex min-h-0 flex-1 flex-col border-x-2 border-x-[#7d8894] bg-[#f0f0f0]">
        <nav className="flex h-[21px] shrink-0 items-center gap-[14px] border-b-2 border-b-[#9a9a9a] bg-linear-to-b from-white via-[#cfdaf0] to-[#dfe7f6] pl-[5px] text-[12px]">
          {menus.map((m) => (
            <button key={m} type="button">{m}</button>
          ))}
        </nav>
        <div className="flex h-[37px] shrink-0 items-stretch border-b-2 border-[#808080] bg-linear-to-b from-white via-[#d3d9ec] to-[#dfe4f4]">
          <div className="flex items-center gap-1 border-r border-[#a0a0a0] bg-[#f0f0f0] pr-[7px] pl-1">
            {toolbar.map((group, i) => (
              <div key={i} className="flex">
                {group.map((name) => <ToolButton key={name} name={name} />)}
              </div>
            ))}
          </div>
        </div>
        <div className="flex h-[26px] shrink-0 items-start border-b border-[#e0e0e0] pt-px pl-[2px]">
          <button type="button" className="h-5 w-[44px] border-r-2 border-[#696969] bg-[#0060c0] pl-2 text-left text-[12px] leading-4 text-white">My</button>
        </div>

        <main className="relative flex min-h-0 flex-1 border-b border-[#505050]">
          <BackWindow title="6B-201312-CME  60 min   #1  L:1  British Pound - CME" className="w-[985px] shrink-0 pl-[2px]">
            <HourlyChart />
          </BackWindow>
          <BackWindow className="w-[927px] shrink-0 pl-[4px]">
            <VolumeChart />
          </BackWindow>
          <BackWindow className="flex-1 pl-[8px]" buttons>
            <div className="flex min-h-0 flex-1">
              <LadderChart />
            </div>
          </BackWindow>
          <FrontWindow />
        </main>

        <footer className="mt-1 flex h-[24px] shrink-0 items-start border-t-2 border-[#696969] pl-[3px] text-[11px]">
          {tabs.map((t, i) => (
            <button
              key={t}
              type="button"
              className={clsx('mr-[2px] border-r-2 border-b-2 border-[#696969] px-1 text-left whitespace-pre', i === 3 ? 'h-[21px] bg-[#0060c0] text-white' : 'h-[19px] bg-[#f4f4f4]')}
            >
              {t}
            </button>
          ))}
        </footer>
      </div>
      <div className="h-[8px] shrink-0 border-t border-b border-t-[#4d88b0] border-b-[#2c5878] bg-[linear-gradient(90deg,#a5d4fa_0%,#8fc4f2_48%,#5cc0f0_50%,#70a8cc_64%,#3070a8_70%,#4090c8_78%,#58c4f4_86%,#30a0d8_100%)]" />
    </div>
  );
}
